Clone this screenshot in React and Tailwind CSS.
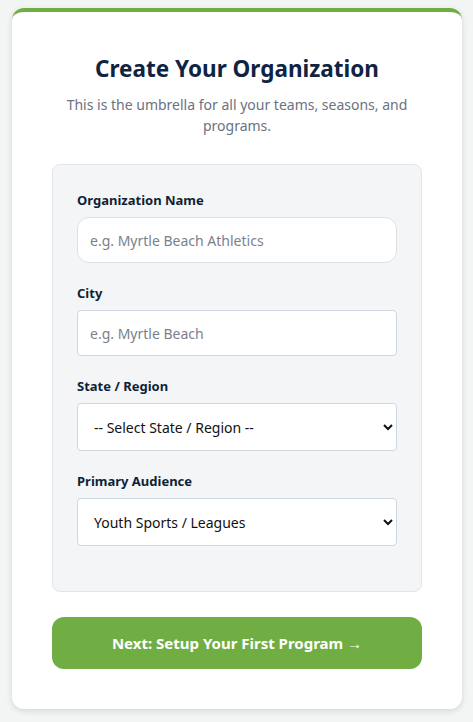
export default function App() {
  const font = { fontFamily: '"Noto Sans", "Open Sans", sans-serif' };
  return (
    <div className="min-h-screen bg-[#f3f4f4] pl-3 pr-[11px] pt-2 pb-3" style={font}>
      <div className="rounded-xl border-t-4 border-[#70ae44] bg-white px-10 pt-[41px] pb-10 shadow-[0_2px_6px_rgba(0,0,0,0.12)]">
        <h1 className="text-center text-[22.5px] font-bold leading-8 text-[#0f2342]">
          Create Your Organization
        </h1>
        <p className="mt-[9px] text-center text-[14px] leading-[21px] text-[#6b7280]">
          This is the umbrella for all your teams, seasons, and programs.
        </p>

        <div className="mt-[28px] rounded-lg border border-[#e2e6ea] bg-[#f4f5f6] px-6 pt-[25px] pb-[25px]">
          <div className="mb-5">
            <label className="mb-[7px] block text-[13px] font-bold leading-5 text-[#111f36]">
              Organization Name
            </label>
            <input
              placeholder="e.g. Myrtle Beach Athletics"
              className="h-[46px] w-full rounded-xl border border-[#dde1e6] bg-white px-3 text-[14px] text-[#1f2937] outline-none placeholder:text-[#7b818b]"
            />
          </div>
          <div className="mb-5">
            <label className="mb-[7px] block text-[13px] font-bold leading-5 text-[#111f36]">
              City
            </label>
            <input
              placeholder="e.g. Myrtle Beach"
              className="h-[46px] w-full rounded border border-[#cfd6df] bg-white px-3 text-[14px] text-[#1f2937] outline-none placeholder:text-[#7b818b]"
            />
          </div>
          <div className="mb-5">
            <label className="mb-[7px] block text-[13px] font-bold leading-5 text-[#111f36]">
              State / Region
            </label>
            <select className="h-[48px] w-full rounded border border-[#cfd6df] bg-white px-3 text-[14px] text-[#111]">
              <option>-- Select State / Region --</option>
            </select>
          </div>
          <div className="mb-5">
            <label className="mb-[7px] block text-[13px] font-bold leading-5 text-[#111f36]">
              Primary Audience
            </label>
            <select className="h-[48px] w-full rounded border border-[#cfd6df] bg-white px-3 text-[14px] text-[#111]">
              <option>Youth Sports / Leagues</option>
            </select>
          </div>
        </div>

        <button className="mt-[25px] h-[52px] w-full rounded-xl bg-[#70ae44] text-[15px] font-bold text-white">
          Next: Setup Your First Program →
        </button>
      </div>
    </div>
  );
}
